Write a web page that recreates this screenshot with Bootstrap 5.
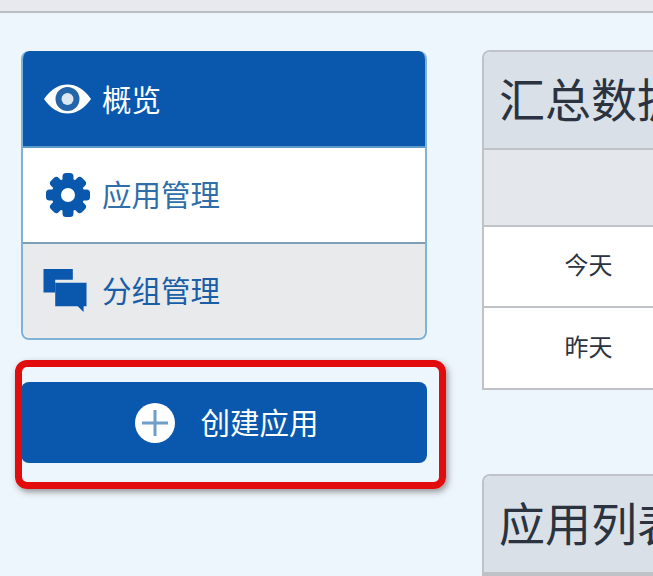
<!DOCTYPE html>
<html lang="zh"><head><meta charset="utf-8"><title>概览</title>
<link rel="stylesheet" href="https://cdn.jsdelivr.net/npm/bootstrap@5.3.0/dist/css/bootstrap.min.css">
<style>
html,body{height:100%;overflow:hidden}
body{background:#eef6fd;font-family:"Liberation Sans","Noto Sans CJK SC",sans-serif;position:relative;color:#2b3340}
.topstrip{height:13px;background:#e8e8ef;border-bottom:2px solid #b9bec5}
.pagewrap{padding:38px 0 0 21px;width:1200px;gap:55px}
.sidecol{width:406px;flex:none}
.sidemenu{border-radius:8px;overflow:hidden;border:2px solid #7fb2d6;border-top:0}
.sidelink{height:96px;font-size:29.500px;padding:0 0 0 21px;gap:9px;border:0;border-bottom:2px solid #7f9fb8;color:#2f6ea8;background:#fff}
.sidelink:last-child{border-bottom:0;background:#e9eaec;color:#1a5ea5;height:94px}
.sidelink.list-group-item.active{background:#0a58ae;color:#fff;border:0;border-bottom:2px solid #5d9acb;margin:0 -2px;padding-left:23px;border-radius:8px 8px 0 0;height:97px}
.sidetext{padding-top:3px}
.list-group-item.active .sidetext{padding-top:6px}
.icoslot{width:49px;flex:none}
.createbtn{margin-top:42px;width:406px;height:81px;background:#0a58ae;border:0;border-radius:8px;font-size:29.500px;color:#fff;gap:25px;padding:0 0 0 6px}
.createbtn:hover{background:#0a58ae;color:#fff}
.createlabel{padding-top:3px}
.redframe{position:absolute;left:15px;top:360px;width:431px;height:129px;border:7px solid #e30c0c;border-radius:12px;box-shadow:2px 3px 6px rgba(70,70,70,.55);pointer-events:none}
.maincol{width:640px;flex:none;margin-top:-1px}
.panelbox{border:2px solid #bfc3c7;border-radius:8px 0 0 0;background:#fff;border-right:0}
.panelhead{height:98px;background:#d9e0e8;border-bottom:2px solid #bfc3c7;font-size:46px;font-weight:400;padding:0 0 0 15px;border-radius:6px 0 0 0;color:#2b3340;line-height:98px;margin:0}
.sumtable{margin:0;font-size:24px;text-align:center;table-layout:fixed;--bs-table-bg:transparent}
.sumtable td,.sumtable th{padding:0 0 1px;vertical-align:middle;border-color:#bfc3c7;border-width:0 0 2px;color:#2b3340}
.sumtable tr:last-child td{border-bottom:0}
.sumtable th{height:76px;background:#e4e7eb;font-weight:400}
.sumtable td{height:81px}
.firstcell{width:209px}
.panelgap{margin-top:84px}
</style></head>
<body>
<div class="topstrip"></div>
<div class="d-flex pagewrap">
  <div class="sidecol">
    <div class="list-group sidemenu">
      <a href="#" class="list-group-item active d-flex align-items-center sidelink">
        <span class="icoslot"><svg class="d-block" width="47" height="30" viewBox="0 0 47 30"><path fill="#fff" d="M0 15C7 5 15 .5 23.500 .5S40 5 47 15C40 25 32 29.500 23.500 29.500S7 25 0 15Z"/><circle cx="23.500" cy="15" r="12" fill="#2464a8"/><circle cx="23.500" cy="15" r="6" fill="#dbe8f3"/></svg></span><span class="sidetext">概览</span></a>
      <a href="#" class="list-group-item d-flex align-items-center sidelink">
        <span class="icoslot"><svg class="d-block" style="margin-left:2px" width="44" height="44" viewBox="0 0 44 44"><g fill="#0a58ae"><path fill-rule="evenodd" d="M22 5.500a16.500 16.500 0 1 0 0 33a16.500 16.500 0 1 0 0-33Zm0 9.500a7 7 0 1 1 0 14a7 7 0 1 1 0-14Z"/><rect x="16.500" y="0" width="11" height="12" rx="3.500"/><rect x="16.500" y="32" width="11" height="12" rx="3.500"/><rect x="16.500" y="0" width="11" height="12" rx="3.500" transform="rotate(45 22 22)"/><rect x="16.500" y="32" width="11" height="12" rx="3.500" transform="rotate(45 22 22)"/><rect x="16.500" y="0" width="11" height="12" rx="3.500" transform="rotate(90 22 22)"/><rect x="16.500" y="32" width="11" height="12" rx="3.500" transform="rotate(90 22 22)"/><rect x="16.500" y="0" width="11" height="12" rx="3.500" transform="rotate(135 22 22)"/><rect x="16.500" y="32" width="11" height="12" rx="3.500" transform="rotate(135 22 22)"/></g></svg></span><span class="sidetext">应用管理</span></a>
      <a href="#" class="list-group-item d-flex align-items-center sidelink">
        <span class="icoslot"><svg class="d-block" style="margin-left:-2px" width="46" height="45" viewBox="0 0 46 46"><path fill="#0a58ae" d="M1 0H31V11H13V24H1Z"/><path fill="#0a58ae" d="M13 14H45V38H42V44L36 38H13Z"/></svg></span><span class="sidetext">分组管理</span></a>
    </div>
    <button type="button" class="btn createbtn d-flex align-items-center justify-content-center">
      <svg width="40" height="40" viewBox="0 0 40 40"><circle cx="20" cy="20" r="20" fill="#fff"/><path d="M20 7V33M7 20H33" stroke="#6f9ecb" stroke-width="3"/></svg>
      <span class="createlabel">创建应用</span>
    </button>
  </div>
  <div class="maincol">
    <div class="panelbox">
      <h2 class="panelhead">汇总数据</h2>
      <table class="table sumtable">
        <thead><tr><th class="firstcell"></th><th></th></tr></thead>
        <tbody><tr><td>今天</td><td></td></tr><tr><td>昨天</td><td></td></tr></tbody>
      </table>
    </div>
    <div class="panelbox panelgap">
      <h2 class="panelhead">应用列表</h2>
    </div>
  </div>
</div>
<div class="redframe"></div>
<script src="https://cdn.jsdelivr.net/npm/bootstrap@5.3.0/dist/js/bootstrap.bundle.min.js"></script>
</body></html>
